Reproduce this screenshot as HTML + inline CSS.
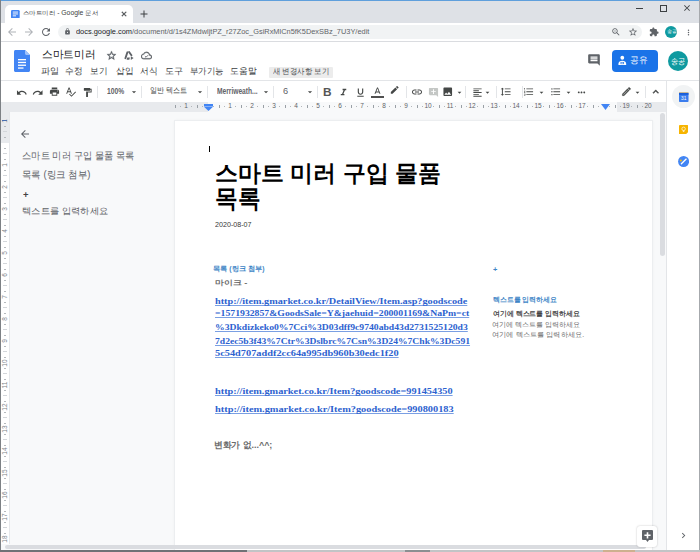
<!DOCTYPE html>
<html><head><meta charset="utf-8">
<style>
*{margin:0;padding:0;box-sizing:border-box}
html,body{width:700px;height:552px;overflow:hidden;background:#fff;font-family:"Liberation Sans",sans-serif;position:relative}
.a{position:absolute;white-space:nowrap}
</style></head><body>
<div class="a" style="left:0px;top:0px;width:700px;height:23px;background:#dee1e6;"></div>
<div class="a" style="left:0px;top:0px;width:700px;height:1.2px;background:#5f9fdc;"></div>
<div class="a" style="left:5px;top:4.6px;width:128px;height:18.4px;background:#fff;border-radius:5px 5px 0 0"></div>
<svg class="a" style="left:11px;top:9.5px" width="8.7" height="8.5" viewBox="0 0 8.7 8.5"><rect x="0" y="0" width="8.7" height="8.5" rx="1.2" fill="#4285f4"/><rect x="1.8" y="1.6" width="5.2" height="0.9" fill="#fff"/><rect x="1.8" y="3.5" width="5.2" height="0.9" fill="#fff"/><rect x="1.8" y="5.4" width="3.2" height="0.9" fill="#fff"/></svg>
<div class="a" id="tab" style="left:22.62px;top:9.99px;font-size:6.352px;color:#3c4043;line-height:1;transform:scaleX(1.0752);transform-origin:0 0;">스마트미러 - Google 문서</div>
<svg class="a" style="left:119.50px;top:9.50px;overflow:visible" width="8" height="8" viewBox="0 0 24 24"><path fill="#3c4043" stroke="#3c4043" stroke-width="1.2" d="M19 6.41L17.59 5 12 10.59 6.41 5 5 6.41 10.59 12 5 17.59 6.41 19 12 13.41 17.59 19 19 17.59 13.41 12z"/></svg>
<svg class="a" style="left:137.50px;top:8.00px;" width="12" height="12" viewBox="0 0 24 24"><path fill="#3c4043" d="M19 13h-6v6h-2v-6H5v-2h6V5h2v6h6v2z"/></svg>
<div class="a" style="left:635.5px;top:8px;width:7px;height:1px;background:#3c4043;"></div>
<div class="a" style="left:660px;top:5px;width:6.5px;height:6.5px;background:transparent;border:1px solid #3c4043"></div>
<svg class="a" style="left:681.80px;top:3.00px;" width="10" height="10" viewBox="0 0 24 24"><path fill="#3c4043" d="M19 6.41L17.59 5 12 10.59 6.41 5 5 6.41 10.59 12 5 17.59 6.41 19 12 13.41 17.59 19 19 17.59 13.41 12z"/></svg>
<div class="a" style="left:0px;top:23px;width:700px;height:19px;background:#fff;"></div>
<svg class="a" style="left:6.00px;top:26.00px;" width="12" height="12" viewBox="0 0 24 24"><path fill="#b0b3b8" d="M20 11H7.83l5.59-5.59L12 4l-8 8 8 8 1.41-1.41L7.83 13H20v-2z"/></svg>
<svg class="a" style="left:23.00px;top:26.00px;" width="12" height="12" viewBox="0 0 24 24"><path fill="#b0b3b8" d="M12 4l-1.41 1.41L16.17 11H4v2h12.17l-5.58 5.59L12 20l8-8z"/></svg>
<svg class="a" style="left:40.00px;top:26.00px;" width="12" height="12" viewBox="0 0 24 24"><path fill="#5f6368" d="M17.65 6.35C16.2 4.9 14.21 4 12 4c-4.42 0-7.99 3.58-7.99 8s3.570 8 7.99 8c3.73 0 6.84-2.55 7.73-6h-2.08c-.82 2.33-3.04 4-5.65 4-3.31 0-6-2.69-6-6s2.69-6 6-6c1.66 0 3.14.69 4.22 1.78L13 11h7V4l-2.35 2.35z"/></svg>
<div class="a" style="left:58px;top:25px;width:584px;height:14px;background:#f1f3f4;border-radius:7px"></div>
<svg class="a" style="left:63.80px;top:28.30px;" width="7" height="7" viewBox="0 0 24 24"><path fill="#5f6368" d="M18 8h-1V6c0-2.76-2.24-5-5-5S7 3.24 7 6v2H6c-1.1 0-2 .9-2 2v10c0 1.1.9 2 2 2h12c1.1 0 2-.9 2-2V10c0-1.1-.9-2-2-2zm-6 9c-1.1 0-2-.9-2-2s.9-2 2-2 2 .9 2 2-.9 2-2 2zm3.1-9H8.9V6c0-1.71 1.39-3.1 3.1-3.1 1.71 0 3.1 1.39 3.1 3.1v2z"/></svg>
<div class="a" id="url" style="left:75.80px;top:28.00px;font-size:7.389px;color:#202124;line-height:1;transform:scaleX(1.0051);transform-origin:0 0;">docs.google.com<span style="color:#5f6368">/document/d/1s4ZMdwljtPZ_r27Zoc_GsiRxMlCn5fK5DexSBz_7U3Y/edit</span></div>
<svg class="a" style="left:610.50px;top:27.00px;" width="10" height="10" viewBox="0 0 24 24"><path fill="#5f6368" d="M15.5 14h-.79l-.28-.27C15.41 12.59 16 11.11 16 9.5 16 5.91 13.09 3 9.5 3S3 5.91 3 9.5 5.91 16 9.5 16c1.61 0 3.09-.59 4.23-1.57l.27.28v.79l5 4.99L20.49 19l-4.99-5zm-6 0C7.01 14 5 11.99 5 9.5S7.01 5 9.5 5 14 7.01 14 9.5 11.99 14 9.5 14zM7 9h5v1H7z"/></svg>
<svg class="a" style="left:627.50px;top:27.00px;" width="10" height="10" viewBox="0 0 24 24"><path fill="#5f6368" d="M22 9.24l-7.19-.62L12 2 9.19 8.63 2 9.24l5.46 4.73L5.82 21 12 17.27 18.18 21l-1.63-7.03L22 9.24zM12 15.4l-3.76 2.27 1-4.28-3.32-2.88 4.38-.38L12 6.1l1.71 4.04 4.38.38-3.32 2.88 1 4.28L12 15.4z"/></svg>
<svg class="a" style="left:648.50px;top:27.00px;" width="10" height="10" viewBox="0 0 24 24"><path fill="#5f6368" d="M20.5 11H19V7c0-1.1-.9-2-2-2h-4V3.5C13 2.12 11.88 1 10.5 1S8 2.12 8 3.5V5H4c-1.1 0-1.99.9-1.99 2v3.8H3.5c1.49 0 2.7 1.21 2.7 2.7s-1.21 2.7-2.7 2.7H2V20c0 1.1.9 2 2 2h3.8v-1.5c0-1.49 1.21-2.7 2.7-2.7 1.49 0 2.7 1.21 2.7 2.7V22H17c1.1 0 2-.9 2-2v-4h1.5c1.38 0 2.5-1.12 2.5-2.5S21.88 11 20.5 11z"/></svg>
<div class="a" style="left:665px;top:26px;width:12px;height:12px;background:#0f9aa0;border-radius:50%"></div>
<div class="a" id="t3" style="left:666.50px;top:29.50px;font-size:4.500px;color:#fff;line-height:1;">송공</div>
<svg class="a" style="left:683.50px;top:27.50px;" width="9" height="9" viewBox="0 0 24 24"><path fill="#5f6368" d="M12 8c1.1 0 2-.9 2-2s-.9-2-2-2-2 .9-2 2 .9 2 2 2zm0 2c-1.1 0-2 .9-2 2s.9 2 2 2 2-.9 2-2-.9-2-2-2zm0 6c-1.1 0-2 .9-2 2s.9 2 2 2 2-.9 2-2-.9-2-2-2z"/></svg>
<div class="a" style="left:0px;top:41px;width:700px;height:1px;background:#dadce0;"></div>
<svg class="a" style="left:14px;top:50px" width="16" height="22" viewBox="0 0 16 22"><path d="M0 1.5C0 .7.7 0 1.5 0H11l5 5v15.5c0 .8-.7 1.5-1.5 1.5h-13C.7 22 0 21.3 0 20.5z" fill="#4285f4"/><path d="M11 0l5 5h-3.5C11.7 5 11 4.3 11 3.5z" fill="#a1c2fa"/><rect x="4" y="9" width="8" height="1.3" fill="#fff"/><rect x="4" y="11.8" width="8" height="1.3" fill="#fff"/><rect x="4" y="14.6" width="8" height="1.3" fill="#fff"/><rect x="4" y="17.4" width="5.5" height="1.3" fill="#fff"/></svg>
<div class="a" id="doctitle" style="left:42.32px;top:49.14px;font-size:11.109px;color:#202124;line-height:1;transform:scaleX(0.9742);transform-origin:0 0;">스마트미러</div>
<svg class="a" style="left:106px;top:49.5px" width="11" height="11" viewBox="0 0 24 24"><path fill="#5f6368" stroke="#5f6368" stroke-width="0.8" d="M22 9.24l-7.19-.62L12 2 9.19 8.63 2 9.24l5.46 4.73L5.82 21 12 17.27 18.18 21l-1.63-7.03L22 9.24zM12 15.4l-3.76 2.27 1-4.28-3.32-2.88 4.38-.38L12 6.1l1.71 4.04 4.38.38-3.32 2.88 1 4.28L12 15.4z"/></svg>
<svg class="a" style="left:123.5px;top:50.5px" width="10" height="10" viewBox="0 0 10 10"><g stroke="#5f6368" stroke-width="1.9" stroke-linecap="round" fill="none"><path d="M3.4 1.3L1.4 7.2"/><path d="M5.1 1.0L7.4 4.3"/></g><path d="M3.3 6.4h2.6l-0.6 2.4H2.6z" fill="#5f6368"/><path d="M6.8 5.2L9.6 7.1 6.8 9z" fill="#5f6368"/></svg>
<svg class="a" style="left:141px;top:50px" width="11" height="11" viewBox="0 0 24 24"><path fill="#5f6368" stroke="#5f6368" stroke-width="0.6" d="M19.35 10.04C18.67 6.59 15.64 4 12 4 9.11 4 6.6 5.64 5.35 8.04 2.34 8.36 0 10.91 0 14c0 3.31 2.69 6 6 6h13c2.76 0 5-2.24 5-5 0-2.64-2.05-4.78-4.65-4.96zM19 18H6c-2.21 0-4-1.790-4-4 0-2.05 1.53-3.76 3.56-3.97l1.07-.11.5-.95C8.08 7.14 9.94 6 12 6c2.62 0 4.88 1.86 5.39 4.43l.3 1.5 1.53.11c1.56.1 2.78 1.41 2.78 2.96 0 1.65-1.35 3-3 3z"/><path d="M8.5 13.5l2.5 2.3 4.5-4.5" stroke="#5f6368" stroke-width="2" fill="none"/></svg>
<div class="a" id="menu0" style="left:40.88px;top:66.75px;font-size:9.000px;color:#3c4043;line-height:1;transform:scaleX(1.0199);transform-origin:0 0;">파일</div>
<div class="a" id="menu1" style="left:64.90px;top:66.75px;font-size:9.000px;color:#3c4043;line-height:1;transform:scaleX(0.9627);transform-origin:0 0;">수정</div>
<div class="a" id="menu2" style="left:90.26px;top:66.75px;font-size:9.000px;color:#3c4043;line-height:1;transform:scaleX(0.9597);transform-origin:0 0;">보기</div>
<div class="a" id="menu3" style="left:115.67px;top:67.24px;font-size:9.018px;color:#3c4043;line-height:1;transform:scaleX(0.9695);transform-origin:0 0;">삽입</div>
<div class="a" id="menu4" style="left:139.91px;top:67.24px;font-size:9.018px;color:#3c4043;line-height:1;transform:scaleX(0.9678);transform-origin:0 0;">서식</div>
<div class="a" id="menu5" style="left:165.26px;top:66.71px;font-size:9.318px;color:#3c4043;line-height:1;transform:scaleX(1.0130);transform-origin:0 0;">도구</div>
<div class="a" id="menu6" style="left:189.80px;top:66.75px;font-size:9.000px;color:#3c4043;line-height:1;transform:scaleX(0.9353);transform-origin:0 0;">부가기능</div>
<div class="a" id="menu7" style="left:229.70px;top:67.24px;font-size:9.018px;color:#3c4043;line-height:1;transform:scaleX(0.9813);transform-origin:0 0;">도움말</div>
<div class="a" style="left:269px;top:66.9px;width:63.6px;height:10.8px;background:#ececec;border-radius:1px"></div>
<div class="a" id="newch" style="left:273.00px;top:67.73px;font-size:8.059px;color:#4a4d51;line-height:1;transform:scaleX(0.9257);transform-origin:0 0;">새 변경사항 보기</div>
<svg class="a" style="left:587.00px;top:53.20px;" width="14" height="14" viewBox="0 0 24 24"><path fill="#5f6368" d="M21.99 4c0-1.1-.89-2-1.99-2H4c-1.1 0-2 .9-2 2v12c0 1.1.9 2 2 2h14l4 4-.01-18zM18 14H6v-2h12v2zm0-3H6V9h12v2zm0-3H6V6h12v2z"/></svg>
<div class="a" style="left:612px;top:50px;width:46px;height:22px;background:#1a73e8;border-radius:4px"></div>
<svg class="a" style="left:618.3px;top:55.2px" width="8.6" height="10.5" viewBox="0 0 10 11"><circle cx="5" cy="2.6" r="2.2" fill="#fff"/><path d="M0.5 9.5c0-2.2 2-3.5 4.5-3.5s4.5 1.3 4.5 3.5V11H.5z" fill="#fff"/><rect x="3" y="7.5" width="4" height="2.5" fill="#1a73e8"/><rect x="3.7" y="8.2" width="2.6" height="1.2" fill="#fff"/></svg>
<div class="a" id="share" style="left:629.51px;top:56.48px;font-size:9.119px;color:#fff;line-height:1;transform:scaleX(0.9700);transform-origin:0 0;">공유</div>
<div class="a" style="left:668px;top:51px;width:20px;height:20px;background:#0f9aa0;border-radius:50%"></div>
<div class="a" id="avatar" style="left:670.65px;top:57.99px;font-size:7.738px;color:#fff;line-height:1;transform:scaleX(0.8929);transform-origin:0 0;">송공</div>
<div class="a" style="left:0px;top:79.5px;width:699px;height:1px;background:#e3e5e8;"></div>
<div class="a" style="left:0px;top:101.5px;width:667px;height:0.5px;background:#e3e5e8;"></div>
<svg class="a" style="left:15.75px;top:86.75px;" width="11.5" height="11.5" viewBox="0 0 24 24"><path fill="#444746" d="M12.5 8c-2.65 0-5.05.99-6.9 2.6L2 7v9h9l-3.62-3.62c1.39-1.16 3.160-1.88 5.12-1.88 3.54 0 6.55 2.31 7.6 5.5l2.37-.78C21.08 11.03 17.15 8 12.5 8z"/></svg>
<svg class="a" style="left:31.75px;top:86.75px;" width="11.5" height="11.5" viewBox="0 0 24 24"><path fill="#444746" d="M18.4 10.6C16.55 8.99 14.15 8 11.5 8c-4.65 0-8.58 3.03-9.96 7.220L3.9 16c1.05-3.19 4.05-5.5 7.6-5.5 1.95 0 3.73.72 5.12 1.88L13 16h9V7l-3.6 3.6z"/></svg>
<svg class="a" style="left:49.00px;top:86.30px;" width="11" height="11" viewBox="0 0 24 24"><path fill="#444746" d="M19 8H5c-1.66 0-3 1.34-3 3v6h4v4h12v-4h4v-6c0-1.66-1.34-3-3-3zm-3 11H8v-5h8v5zm3-7c-.55 0-1-.45-1-1s.45-1 1-1 1 .45 1 1-.45 1-1 1zm-1-9H6v4h12V3z"/></svg>
<svg class="a" style="left:64.75px;top:86.05px;" width="11.5" height="11.5" viewBox="0 0 24 24"><path fill="#444746" d="M12.45 16h2.09L9.43 3H7.570L2.46 16h2.09l1.12-3h5.64l1.14 3zm-6.02-5L8.5 5.48 10.57 11H6.43zm15.16.59l-8.09 8.09L9.83 16l-1.41 1.41 5.09 5.09L23 13l-1.41-1.41z"/></svg>
<svg class="a" style="left:82.00px;top:86.50px;" width="11" height="11" viewBox="0 0 24 24"><path fill="#444746" d="M18 4V3c0-.55-.45-1-1-1H5c-.55 0-1 .45-1 1v4c0 .55.45 1 1 1h12c.55 0 1-.45 1-1V6h1v4H9v11c0 .55.45 1 1 1h2c.55 0 1-.45 1-1v-9h8V4h-3z"/></svg>
<div class="a" style="left:97px;top:85.5px;width:1px;height:12px;background:#e3e5e8;"></div>
<div class="a" style="left:141px;top:85.5px;width:1px;height:12px;background:#e3e5e8;"></div>
<div class="a" style="left:207px;top:85.5px;width:1px;height:12px;background:#e3e5e8;"></div>
<div class="a" style="left:273px;top:85.5px;width:1px;height:12px;background:#e3e5e8;"></div>
<div class="a" style="left:317px;top:85.5px;width:1px;height:12px;background:#e3e5e8;"></div>
<div class="a" style="left:406px;top:85.5px;width:1px;height:12px;background:#e3e5e8;"></div>
<div class="a" style="left:465px;top:85.5px;width:1px;height:12px;background:#e3e5e8;"></div>
<div class="a" style="left:496px;top:85.5px;width:1px;height:12px;background:#e3e5e8;"></div>
<div class="a" style="left:522px;top:85.5px;width:1px;height:12px;background:#e3e5e8;"></div>
<div class="a" style="left:645px;top:85.5px;width:1px;height:12px;background:#e3e5e8;"></div>
<div class="a" id="zoom" style="left:106.69px;top:87.12px;font-size:8.297px;color:#5f6368;line-height:1;transform:scaleX(0.8105);transform-origin:0 0;font-weight:bold">100%</div>
<svg class="a" style="left:128.50px;top:86.50px;" width="10" height="10" viewBox="0 0 24 24"><path fill="#444746" d="M7 10l5 5 5-5z"/></svg>
<div class="a" id="style" style="left:149.85px;top:86.52px;font-size:7.724px;color:#444746;line-height:1;transform:scaleX(0.8826);transform-origin:0 0;">일반 텍스트</div>
<svg class="a" style="left:194.50px;top:86.50px;" width="10" height="10" viewBox="0 0 24 24"><path fill="#444746" d="M7 10l5 5 5-5z"/></svg>
<div class="a" id="font" style="left:216.67px;top:87.22px;font-size:8.348px;color:#5f6368;line-height:1;transform:scaleX(0.7978);transform-origin:0 0;font-weight:bold">Merriweath...</div>
<svg class="a" style="left:260.50px;top:86.50px;" width="10" height="10" viewBox="0 0 24 24"><path fill="#444746" d="M7 10l5 5 5-5z"/></svg>
<div class="a" id="fsize" style="left:283.09px;top:86.91px;font-size:8.727px;color:#5f6368;line-height:1;transform:scaleX(1.0596);transform-origin:0 0;">6</div>
<svg class="a" style="left:304.50px;top:86.50px;" width="10" height="10" viewBox="0 0 24 24"><path fill="#444746" d="M7 10l5 5 5-5z"/></svg>
<div class="a" id="bold" style="left:322.50px;top:87.10px;font-size:10.500px;color:#555;line-height:1;transform:scaleX(1.1278);transform-origin:0 0;font-weight:bold">B</div>
<svg class="a" style="left:337.50px;top:86.50px;" width="11" height="11" viewBox="0 0 24 24"><path fill="#444746" d="M10 4v3h2.21l-3.42 8H6v3h8v-3h-2.21l3.42-8H18V4z"/></svg>
<svg class="a" style="left:354.50px;top:87.00px;" width="11" height="11" viewBox="0 0 24 24"><path fill="#444746" d="M12 17c3.31 0 6-2.69 6-6V3h-2.5v8c0 1.93-1.57 3.5-3.5 3.5S8.5 12.93 8.5 11V3H6v8c0 3.31 2.690 6 6 6zm-7 2v2h14v-2H5z"/></svg>
<svg class="a" style="left:371.50px;top:85.50px;" width="11" height="11" viewBox="0 0 24 24"><path fill="#444746" d="M11 3L5.5 17h2.25l1.12-3h6.25l1.12 3h2.25L13 3h-2zm-1.38 9L12 5.67 14.38 12H9.62z"/></svg>
<div class="a" style="left:371px;top:96.3px;width:12.5px;height:1.5px;background:#505050;"></div>
<svg class="a" style="left:388.50px;top:86.00px;" width="11" height="11" viewBox="0 0 24 24"><path fill="#444746" d="M17.75 7L14 3.25l-10 10V17h3.75l10-10zm2.96-2.96c.39-.39.39-1.02 0-1.41L18.37.29c-.39-.39-1.02-.39-1.41 0L15 2.25 18.75 6l1.96-1.96z"/></svg>
<svg class="a" style="left:411.00px;top:86.00px;" width="12" height="12" viewBox="0 0 24 24"><path fill="#444746" d="M3.9 12c0-1.71 1.39-3.1 3.1-3.1h4V7H7c-2.76 0-5 2.24-5 5s2.24 5 5 5h4v-1.9H7c-1.71 0-3.1-1.39-3.1-3.1zM8 13h8v-2H8v2zm9-6h-4v1.9h4c1.71 0 3.1 1.39 3.1 3.1s-1.39 3.1-3.1 3.1h-4V17h4c2.76 0 5-2.24 5-5s-2.24-5-5-5z"/></svg>
<svg class="a" style="left:427.50px;top:86.50px;" width="11" height="11" viewBox="0 0 24 24"><path fill="#c4c7c5" d="M22 4c0-1.1-.9-2-2-2H4c-1.1 0-1.99.9-1.99 2L2 16c0 1.1.9 2 2 2h14l4 4V4zm-5 7h-4v4h-2v-4H7V9h4V5h2v4h4v2z"/></svg>
<svg class="a" style="left:442.25px;top:86.25px;" width="11.5" height="11.5" viewBox="0 0 24 24"><path fill="#444746" d="M21 19V5c0-1.1-.9-2-2-2H5c-1.1 0-2 .9-2 2v14c0 1.1.9 2 2 2h14c1.1 0 2-.9 2-2zM8.5 13.5l2.5 3.01L14.5 12l4.5 6H5l3.5-4.5z"/></svg>
<svg class="a" style="left:454.50px;top:87.50px;" width="9" height="9" viewBox="0 0 24 24"><path fill="#444746" d="M7 10l5 5 5-5z"/></svg>
<svg class="a" style="left:471.50px;top:86.50px;" width="11" height="11" viewBox="0 0 24 24"><path fill="#444746" d="M15 15H3v2h12v-2zm0-8H3v2h12V7zM3 13h18v-2H3v2zm0 8h18v-2H3v2zM3 3v2h18V3H3z"/></svg>
<svg class="a" style="left:482.50px;top:87.50px;" width="9" height="9" viewBox="0 0 24 24"><path fill="#444746" d="M7 10l5 5 5-5z"/></svg>
<svg class="a" style="left:500.25px;top:86.25px;" width="11.5" height="11.5" viewBox="0 0 24 24"><path fill="#444746" d="M6 7h2.5L5 3.5 1.5 7H4v10H1.5L5 20.5 8.5 17H6V7zm4-2v2h12V5H10zm0 14h12v-2H10v2zm0-6h12v-2H10v2z"/></svg>
<svg class="a" style="left:523.25px;top:86.25px;" width="11.5" height="11.5" viewBox="0 0 24 24"><path fill="#444746" d="M2 17h2v.5H3v1h1v.5H2v1h3v-4H2v1zm1-9h1V4H2v1h1v3zm-1 3h1.8L2 13.1v.9h3v-1H3.2L5 10.9V10H2v1zm5-6v2h14V5H7zm0 14h14v-2H7v2zm0-6h14v-2H7v2z"/></svg>
<svg class="a" style="left:536.50px;top:87.50px;" width="9" height="9" viewBox="0 0 24 24"><path fill="#444746" d="M7 10l5 5 5-5z"/></svg>
<svg class="a" style="left:550.25px;top:86.25px;" width="11.5" height="11.5" viewBox="0 0 24 24"><path fill="#444746" d="M4 10.5c-.83 0-1.5.67-1.5 1.5s.67 1.5 1.5 1.5 1.5-.67 1.5-1.5-.67-1.5-1.5-1.5zm0-6c-.83 0-1.5.67-1.5 1.5S3.17 7.5 4 7.5 5.5 6.83 5.5 6 4.83 4.5 4 4.5zm0 12c-.83 0-1.5.68-1.5 1.5s.68 1.5 1.5 1.5 1.5-.68 1.5-1.5-.67-1.5-1.5-1.5zM7 19h14v-2H7v2zm0-6h14v-2H7v2zm0-8v2h14V5H7z"/></svg>
<svg class="a" style="left:563.50px;top:87.50px;" width="9" height="9" viewBox="0 0 24 24"><path fill="#444746" d="M7 10l5 5 5-5z"/></svg>
<svg class="a" style="left:575.50px;top:86.50px;" width="11" height="11" viewBox="0 0 24 24"><path fill="#444746" d="M6 10c-1.1 0-2 .9-2 2s.9 2 2 2 2-.9 2-2-.9-2-2-2zm12 0c-1.1 0-2 .9-2 2s.9 2 2 2 2-.9 2-2-.9-2-2-2zm-6 0c-1.1 0-2 .9-2 2s.9 2 2 2 2-.9 2-2-.9-2-2-2z"/></svg>
<svg class="a" style="left:620.80px;top:86.00px;" width="11" height="11" viewBox="0 0 24 24"><path fill="#444746" stroke="#444746" stroke-width="0.8" d="M3 17.25V21h3.75L17.81 9.94l-3.75-3.75L3 17.25zM5.92 19H5v-.92l9.06-9.06.92.92L5.92 19zM20.71 5.63l-2.34-2.34c-.2-.2-.45-.29-.71-.29s-.51.1-.7.29l-1.83 1.83 3.75 3.75 1.83-1.83c.39-.39.39-1.02 0-1.41z"/></svg>
<svg class="a" style="left:632.50px;top:87.50px;" width="9" height="9" viewBox="0 0 24 24"><path fill="#444746" d="M7 10l5 5 5-5z"/></svg>
<svg class="a" style="left:650.05px;top:85.75px;" width="11.5" height="11.5" viewBox="0 0 24 24"><path fill="#444746" stroke="#444746" stroke-width="0.9" d="M12 8l-6 6 1.41 1.41L12 10.83l4.59 4.58L18 14z"/></svg>
<div class="a" style="left:0px;top:102px;width:667px;height:9.5px;background:#e8eaed;"></div>
<div class="a" style="left:208px;top:102px;width:409px;height:9.5px;background:#f8f9fa;"></div>
<div class="a" style="left:174.5px;top:104.8px;width:1px;height:3.5px;background:#9aa0a6"></div>
<div class="a" style="left:180.0px;top:105.9px;width:1px;height:1.2px;background:#b3b7bb"></div>
<div class="a" style="left:176px;top:103.2px;width:20px;text-align:center;font-size:6.5px;line-height:1;color:#5f6368">1</div>
<div class="a" style="left:191.0px;top:105.9px;width:1px;height:1.2px;background:#b3b7bb"></div>
<div class="a" style="left:196.5px;top:104.8px;width:1px;height:3.5px;background:#9aa0a6"></div>
<div class="a" style="left:202.0px;top:105.9px;width:1px;height:1.2px;background:#b3b7bb"></div>
<div class="a" style="left:213.0px;top:105.9px;width:1px;height:1.2px;background:#b3b7bb"></div>
<div class="a" style="left:218.5px;top:104.8px;width:1px;height:3.5px;background:#9aa0a6"></div>
<div class="a" style="left:224.0px;top:105.9px;width:1px;height:1.2px;background:#b3b7bb"></div>
<div class="a" style="left:220px;top:103.2px;width:20px;text-align:center;font-size:6.5px;line-height:1;color:#5f6368">1</div>
<div class="a" style="left:235.0px;top:105.9px;width:1px;height:1.2px;background:#b3b7bb"></div>
<div class="a" style="left:240.5px;top:104.8px;width:1px;height:3.5px;background:#9aa0a6"></div>
<div class="a" style="left:246.0px;top:105.9px;width:1px;height:1.2px;background:#b3b7bb"></div>
<div class="a" style="left:242px;top:103.2px;width:20px;text-align:center;font-size:6.5px;line-height:1;color:#5f6368">2</div>
<div class="a" style="left:257.0px;top:105.9px;width:1px;height:1.2px;background:#b3b7bb"></div>
<div class="a" style="left:262.5px;top:104.8px;width:1px;height:3.5px;background:#9aa0a6"></div>
<div class="a" style="left:268.0px;top:105.9px;width:1px;height:1.2px;background:#b3b7bb"></div>
<div class="a" style="left:264px;top:103.2px;width:20px;text-align:center;font-size:6.5px;line-height:1;color:#5f6368">3</div>
<div class="a" style="left:279.0px;top:105.9px;width:1px;height:1.2px;background:#b3b7bb"></div>
<div class="a" style="left:284.5px;top:104.8px;width:1px;height:3.5px;background:#9aa0a6"></div>
<div class="a" style="left:290.0px;top:105.9px;width:1px;height:1.2px;background:#b3b7bb"></div>
<div class="a" style="left:286px;top:103.2px;width:20px;text-align:center;font-size:6.5px;line-height:1;color:#5f6368">4</div>
<div class="a" style="left:301.0px;top:105.9px;width:1px;height:1.2px;background:#b3b7bb"></div>
<div class="a" style="left:306.5px;top:104.8px;width:1px;height:3.5px;background:#9aa0a6"></div>
<div class="a" style="left:312.0px;top:105.9px;width:1px;height:1.2px;background:#b3b7bb"></div>
<div class="a" style="left:308px;top:103.2px;width:20px;text-align:center;font-size:6.5px;line-height:1;color:#5f6368">5</div>
<div class="a" style="left:323.0px;top:105.9px;width:1px;height:1.2px;background:#b3b7bb"></div>
<div class="a" style="left:328.5px;top:104.8px;width:1px;height:3.5px;background:#9aa0a6"></div>
<div class="a" style="left:334.0px;top:105.9px;width:1px;height:1.2px;background:#b3b7bb"></div>
<div class="a" style="left:330px;top:103.2px;width:20px;text-align:center;font-size:6.5px;line-height:1;color:#5f6368">6</div>
<div class="a" style="left:345.0px;top:105.9px;width:1px;height:1.2px;background:#b3b7bb"></div>
<div class="a" style="left:350.5px;top:104.8px;width:1px;height:3.5px;background:#9aa0a6"></div>
<div class="a" style="left:356.0px;top:105.9px;width:1px;height:1.2px;background:#b3b7bb"></div>
<div class="a" style="left:352px;top:103.2px;width:20px;text-align:center;font-size:6.5px;line-height:1;color:#5f6368">7</div>
<div class="a" style="left:367.0px;top:105.9px;width:1px;height:1.2px;background:#b3b7bb"></div>
<div class="a" style="left:372.5px;top:104.8px;width:1px;height:3.5px;background:#9aa0a6"></div>
<div class="a" style="left:378.0px;top:105.9px;width:1px;height:1.2px;background:#b3b7bb"></div>
<div class="a" style="left:374px;top:103.2px;width:20px;text-align:center;font-size:6.5px;line-height:1;color:#5f6368">8</div>
<div class="a" style="left:389.0px;top:105.9px;width:1px;height:1.2px;background:#b3b7bb"></div>
<div class="a" style="left:394.5px;top:104.8px;width:1px;height:3.5px;background:#9aa0a6"></div>
<div class="a" style="left:400.0px;top:105.9px;width:1px;height:1.2px;background:#b3b7bb"></div>
<div class="a" style="left:396px;top:103.2px;width:20px;text-align:center;font-size:6.5px;line-height:1;color:#5f6368">9</div>
<div class="a" style="left:411.0px;top:105.9px;width:1px;height:1.2px;background:#b3b7bb"></div>
<div class="a" style="left:416.5px;top:104.8px;width:1px;height:3.5px;background:#9aa0a6"></div>
<div class="a" style="left:422.0px;top:105.9px;width:1px;height:1.2px;background:#b3b7bb"></div>
<div class="a" style="left:418px;top:103.2px;width:20px;text-align:center;font-size:6.5px;line-height:1;color:#5f6368">10</div>
<div class="a" style="left:433.0px;top:105.9px;width:1px;height:1.2px;background:#b3b7bb"></div>
<div class="a" style="left:438.5px;top:104.8px;width:1px;height:3.5px;background:#9aa0a6"></div>
<div class="a" style="left:444.0px;top:105.9px;width:1px;height:1.2px;background:#b3b7bb"></div>
<div class="a" style="left:440px;top:103.2px;width:20px;text-align:center;font-size:6.5px;line-height:1;color:#5f6368">11</div>
<div class="a" style="left:455.0px;top:105.9px;width:1px;height:1.2px;background:#b3b7bb"></div>
<div class="a" style="left:460.5px;top:104.8px;width:1px;height:3.5px;background:#9aa0a6"></div>
<div class="a" style="left:466.0px;top:105.9px;width:1px;height:1.2px;background:#b3b7bb"></div>
<div class="a" style="left:462px;top:103.2px;width:20px;text-align:center;font-size:6.5px;line-height:1;color:#5f6368">12</div>
<div class="a" style="left:477.0px;top:105.9px;width:1px;height:1.2px;background:#b3b7bb"></div>
<div class="a" style="left:482.5px;top:104.8px;width:1px;height:3.5px;background:#9aa0a6"></div>
<div class="a" style="left:488.0px;top:105.9px;width:1px;height:1.2px;background:#b3b7bb"></div>
<div class="a" style="left:484px;top:103.2px;width:20px;text-align:center;font-size:6.5px;line-height:1;color:#5f6368">13</div>
<div class="a" style="left:499.0px;top:105.9px;width:1px;height:1.2px;background:#b3b7bb"></div>
<div class="a" style="left:504.5px;top:104.8px;width:1px;height:3.5px;background:#9aa0a6"></div>
<div class="a" style="left:510.0px;top:105.9px;width:1px;height:1.2px;background:#b3b7bb"></div>
<div class="a" style="left:506px;top:103.2px;width:20px;text-align:center;font-size:6.5px;line-height:1;color:#5f6368">14</div>
<div class="a" style="left:521.0px;top:105.9px;width:1px;height:1.2px;background:#b3b7bb"></div>
<div class="a" style="left:526.5px;top:104.8px;width:1px;height:3.5px;background:#9aa0a6"></div>
<div class="a" style="left:532.0px;top:105.9px;width:1px;height:1.2px;background:#b3b7bb"></div>
<div class="a" style="left:528px;top:103.2px;width:20px;text-align:center;font-size:6.5px;line-height:1;color:#5f6368">15</div>
<div class="a" style="left:543.0px;top:105.9px;width:1px;height:1.2px;background:#b3b7bb"></div>
<div class="a" style="left:548.5px;top:104.8px;width:1px;height:3.5px;background:#9aa0a6"></div>
<div class="a" style="left:554.0px;top:105.9px;width:1px;height:1.2px;background:#b3b7bb"></div>
<div class="a" style="left:550px;top:103.2px;width:20px;text-align:center;font-size:6.5px;line-height:1;color:#5f6368">16</div>
<div class="a" style="left:565.0px;top:105.9px;width:1px;height:1.2px;background:#b3b7bb"></div>
<div class="a" style="left:570.5px;top:104.8px;width:1px;height:3.5px;background:#9aa0a6"></div>
<div class="a" style="left:576.0px;top:105.9px;width:1px;height:1.2px;background:#b3b7bb"></div>
<div class="a" style="left:572px;top:103.2px;width:20px;text-align:center;font-size:6.5px;line-height:1;color:#5f6368">17</div>
<div class="a" style="left:587.0px;top:105.9px;width:1px;height:1.2px;background:#b3b7bb"></div>
<div class="a" style="left:592.5px;top:104.8px;width:1px;height:3.5px;background:#9aa0a6"></div>
<div class="a" style="left:598.0px;top:105.9px;width:1px;height:1.2px;background:#b3b7bb"></div>
<div class="a" style="left:609.0px;top:105.9px;width:1px;height:1.2px;background:#b3b7bb"></div>
<div class="a" style="left:614.5px;top:104.8px;width:1px;height:3.5px;background:#9aa0a6"></div>
<div class="a" style="left:620.0px;top:105.9px;width:1px;height:1.2px;background:#b3b7bb"></div>
<div class="a" style="left:616px;top:103.2px;width:20px;text-align:center;font-size:6.5px;line-height:1;color:#5f6368">19</div>
<div class="a" style="left:631.0px;top:105.9px;width:1px;height:1.2px;background:#b3b7bb"></div>
<div class="a" style="left:636.5px;top:104.8px;width:1px;height:3.5px;background:#9aa0a6"></div>
<div class="a" style="left:642.0px;top:105.9px;width:1px;height:1.2px;background:#b3b7bb"></div>
<div class="a" style="left:638px;top:103.2px;width:20px;text-align:center;font-size:6.5px;line-height:1;color:#5f6368">20</div>
<svg class="a" style="left:203.5px;top:103.5px" width="9" height="7" viewBox="0 0 9 7"><path d="M0 0h9v2.8L4.5 7 0 2.8z" fill="#4285f4"/><rect x="0" y="2.2" width="9" height="0.6" fill="#fff" opacity=".6"/></svg>
<svg class="a" style="left:601px;top:104px" width="9" height="6" viewBox="0 0 9 6"><path d="M0 0h9L4.5 6z" fill="#4285f4"/></svg>
<div class="a" style="left:0px;top:112px;width:667px;height:440px;background:#f8f9fa;"></div>
<div class="a" style="left:175px;top:121px;width:477px;height:431px;background:#fff;box-shadow:0 0 0 1px #eceef0,0 0 3px rgba(60,64,67,.10)"></div>
<div class="a" style="left:1px;top:111.5px;width:8px;height:432px;background:#fff;"></div>
<div class="a" style="left:1px;top:111.5px;width:8px;height:31.5px;background:#e8eaed;"></div>
<div class="a" style="left:9px;top:111.5px;width:1px;height:432px;background:#e5e7ea;"></div>
<div class="a" style="left:0px;top:115.5px;width:10px;height:10px;font-size:6.5px;line-height:10px;text-align:center;color:#80868b;transform:rotate(-90deg)">1</div>
<div class="a" style="left:4.4px;top:125.5px;width:1.2px;height:1px;background:#b5b9bd"></div>
<div class="a" style="left:3.2px;top:131.0px;width:3.5px;height:1px;background:#d3d6da"></div>
<div class="a" style="left:4.4px;top:136.5px;width:1.2px;height:1px;background:#b5b9bd"></div>
<div class="a" style="left:4.4px;top:147.5px;width:1.2px;height:1px;background:#b5b9bd"></div>
<div class="a" style="left:3.2px;top:153.0px;width:3.5px;height:1px;background:#d3d6da"></div>
<div class="a" style="left:4.4px;top:158.5px;width:1.2px;height:1px;background:#b5b9bd"></div>
<div class="a" style="left:0px;top:159.5px;width:10px;height:10px;font-size:6.5px;line-height:10px;text-align:center;color:#80868b;transform:rotate(-90deg)">1</div>
<div class="a" style="left:4.4px;top:169.5px;width:1.2px;height:1px;background:#b5b9bd"></div>
<div class="a" style="left:3.2px;top:175.0px;width:3.5px;height:1px;background:#d3d6da"></div>
<div class="a" style="left:4.4px;top:180.5px;width:1.2px;height:1px;background:#b5b9bd"></div>
<div class="a" style="left:0px;top:181.5px;width:10px;height:10px;font-size:6.5px;line-height:10px;text-align:center;color:#80868b;transform:rotate(-90deg)">2</div>
<div class="a" style="left:4.4px;top:191.5px;width:1.2px;height:1px;background:#b5b9bd"></div>
<div class="a" style="left:3.2px;top:197.0px;width:3.5px;height:1px;background:#d3d6da"></div>
<div class="a" style="left:4.4px;top:202.5px;width:1.2px;height:1px;background:#b5b9bd"></div>
<div class="a" style="left:0px;top:203.5px;width:10px;height:10px;font-size:6.5px;line-height:10px;text-align:center;color:#80868b;transform:rotate(-90deg)">3</div>
<div class="a" style="left:4.4px;top:213.5px;width:1.2px;height:1px;background:#b5b9bd"></div>
<div class="a" style="left:3.2px;top:219.0px;width:3.5px;height:1px;background:#d3d6da"></div>
<div class="a" style="left:4.4px;top:224.5px;width:1.2px;height:1px;background:#b5b9bd"></div>
<div class="a" style="left:0px;top:225.5px;width:10px;height:10px;font-size:6.5px;line-height:10px;text-align:center;color:#80868b;transform:rotate(-90deg)">4</div>
<div class="a" style="left:4.4px;top:235.5px;width:1.2px;height:1px;background:#b5b9bd"></div>
<div class="a" style="left:3.2px;top:241.0px;width:3.5px;height:1px;background:#d3d6da"></div>
<div class="a" style="left:4.4px;top:246.5px;width:1.2px;height:1px;background:#b5b9bd"></div>
<div class="a" style="left:0px;top:247.5px;width:10px;height:10px;font-size:6.5px;line-height:10px;text-align:center;color:#80868b;transform:rotate(-90deg)">5</div>
<div class="a" style="left:4.4px;top:257.5px;width:1.2px;height:1px;background:#b5b9bd"></div>
<div class="a" style="left:3.2px;top:263.0px;width:3.5px;height:1px;background:#d3d6da"></div>
<div class="a" style="left:4.4px;top:268.5px;width:1.2px;height:1px;background:#b5b9bd"></div>
<div class="a" style="left:0px;top:269.5px;width:10px;height:10px;font-size:6.5px;line-height:10px;text-align:center;color:#80868b;transform:rotate(-90deg)">6</div>
<div class="a" style="left:4.4px;top:279.5px;width:1.2px;height:1px;background:#b5b9bd"></div>
<div class="a" style="left:3.2px;top:285.0px;width:3.5px;height:1px;background:#d3d6da"></div>
<div class="a" style="left:4.4px;top:290.5px;width:1.2px;height:1px;background:#b5b9bd"></div>
<div class="a" style="left:0px;top:291.5px;width:10px;height:10px;font-size:6.5px;line-height:10px;text-align:center;color:#80868b;transform:rotate(-90deg)">7</div>
<div class="a" style="left:4.4px;top:301.5px;width:1.2px;height:1px;background:#b5b9bd"></div>
<div class="a" style="left:3.2px;top:307.0px;width:3.5px;height:1px;background:#d3d6da"></div>
<div class="a" style="left:4.4px;top:312.5px;width:1.2px;height:1px;background:#b5b9bd"></div>
<div class="a" style="left:0px;top:313.5px;width:10px;height:10px;font-size:6.5px;line-height:10px;text-align:center;color:#80868b;transform:rotate(-90deg)">8</div>
<div class="a" style="left:4.4px;top:323.5px;width:1.2px;height:1px;background:#b5b9bd"></div>
<div class="a" style="left:3.2px;top:329.0px;width:3.5px;height:1px;background:#d3d6da"></div>
<div class="a" style="left:4.4px;top:334.5px;width:1.2px;height:1px;background:#b5b9bd"></div>
<div class="a" style="left:0px;top:335.5px;width:10px;height:10px;font-size:6.5px;line-height:10px;text-align:center;color:#80868b;transform:rotate(-90deg)">9</div>
<div class="a" style="left:4.4px;top:345.5px;width:1.2px;height:1px;background:#b5b9bd"></div>
<div class="a" style="left:3.2px;top:351.0px;width:3.5px;height:1px;background:#d3d6da"></div>
<div class="a" style="left:4.4px;top:356.5px;width:1.2px;height:1px;background:#b5b9bd"></div>
<div class="a" style="left:0px;top:357.5px;width:10px;height:10px;font-size:6.5px;line-height:10px;text-align:center;color:#80868b;transform:rotate(-90deg)">10</div>
<div class="a" style="left:4.4px;top:367.5px;width:1.2px;height:1px;background:#b5b9bd"></div>
<div class="a" style="left:3.2px;top:373.0px;width:3.5px;height:1px;background:#d3d6da"></div>
<div class="a" style="left:4.4px;top:378.5px;width:1.2px;height:1px;background:#b5b9bd"></div>
<div class="a" style="left:0px;top:379.5px;width:10px;height:10px;font-size:6.5px;line-height:10px;text-align:center;color:#80868b;transform:rotate(-90deg)">11</div>
<div class="a" style="left:4.4px;top:389.5px;width:1.2px;height:1px;background:#b5b9bd"></div>
<div class="a" style="left:3.2px;top:395.0px;width:3.5px;height:1px;background:#d3d6da"></div>
<div class="a" style="left:4.4px;top:400.5px;width:1.2px;height:1px;background:#b5b9bd"></div>
<div class="a" style="left:0px;top:401.5px;width:10px;height:10px;font-size:6.5px;line-height:10px;text-align:center;color:#80868b;transform:rotate(-90deg)">12</div>
<div class="a" style="left:4.4px;top:411.5px;width:1.2px;height:1px;background:#b5b9bd"></div>
<div class="a" style="left:3.2px;top:417.0px;width:3.5px;height:1px;background:#d3d6da"></div>
<div class="a" style="left:4.4px;top:422.5px;width:1.2px;height:1px;background:#b5b9bd"></div>
<div class="a" style="left:0px;top:423.5px;width:10px;height:10px;font-size:6.5px;line-height:10px;text-align:center;color:#80868b;transform:rotate(-90deg)">13</div>
<div class="a" style="left:4.4px;top:433.5px;width:1.2px;height:1px;background:#b5b9bd"></div>
<div class="a" style="left:3.2px;top:439.0px;width:3.5px;height:1px;background:#d3d6da"></div>
<div class="a" style="left:4.4px;top:444.5px;width:1.2px;height:1px;background:#b5b9bd"></div>
<div class="a" style="left:0px;top:445.5px;width:10px;height:10px;font-size:6.5px;line-height:10px;text-align:center;color:#80868b;transform:rotate(-90deg)">14</div>
<div class="a" style="left:4.4px;top:455.5px;width:1.2px;height:1px;background:#b5b9bd"></div>
<div class="a" style="left:3.2px;top:461.0px;width:3.5px;height:1px;background:#d3d6da"></div>
<div class="a" style="left:4.4px;top:466.5px;width:1.2px;height:1px;background:#b5b9bd"></div>
<div class="a" style="left:0px;top:467.5px;width:10px;height:10px;font-size:6.5px;line-height:10px;text-align:center;color:#80868b;transform:rotate(-90deg)">15</div>
<div class="a" style="left:4.4px;top:477.5px;width:1.2px;height:1px;background:#b5b9bd"></div>
<div class="a" style="left:3.2px;top:483.0px;width:3.5px;height:1px;background:#d3d6da"></div>
<div class="a" style="left:4.4px;top:488.5px;width:1.2px;height:1px;background:#b5b9bd"></div>
<div class="a" style="left:0px;top:489.5px;width:10px;height:10px;font-size:6.5px;line-height:10px;text-align:center;color:#80868b;transform:rotate(-90deg)">16</div>
<div class="a" style="left:4.4px;top:499.5px;width:1.2px;height:1px;background:#b5b9bd"></div>
<div class="a" style="left:3.2px;top:505.0px;width:3.5px;height:1px;background:#d3d6da"></div>
<div class="a" style="left:4.4px;top:510.5px;width:1.2px;height:1px;background:#b5b9bd"></div>
<div class="a" style="left:0px;top:511.5px;width:10px;height:10px;font-size:6.5px;line-height:10px;text-align:center;color:#80868b;transform:rotate(-90deg)">17</div>
<div class="a" style="left:4.4px;top:521.5px;width:1.2px;height:1px;background:#b5b9bd"></div>
<div class="a" style="left:3.2px;top:527.0px;width:3.5px;height:1px;background:#d3d6da"></div>
<div class="a" style="left:4.4px;top:532.5px;width:1.2px;height:1px;background:#b5b9bd"></div>
<div class="a" style="left:0px;top:533.5px;width:10px;height:10px;font-size:6.5px;line-height:10px;text-align:center;color:#80868b;transform:rotate(-90deg)">18</div>
<div class="a" style="left:2px;top:119.5px;width:5px;height:1.6px;background:#4a6fb0;border-radius:0 1px 1px 0"></div>
<div class="a" style="left:659.5px;top:113px;width:5px;height:143px;background:#dadce0;border-radius:3px"></div>
<div class="a" style="left:5px;top:544.5px;width:641px;height:4.5px;background:#dadce0;border-radius:3px"></div>
<div class="a" style="left:667px;top:81px;width:32px;height:471px;background:#fff;"></div>
<div class="a" style="left:666px;top:80px;width:1px;height:472px;background:#e3e5e8;"></div>
<div class="a" style="left:672px;top:85px;width:23px;height:23px;background:#f1f3f4;border-radius:50%"></div>
<svg class="a" style="left:679px;top:91.5px" width="9.5" height="10" viewBox="0 0 9.5 10"><rect x="0" y="0" width="9.5" height="1.5" fill="#c9b99a"/><rect x="0" y="1" width="9.5" height="9" rx="0.8" fill="#3b7ded"/><rect x="0" y="1" width="9.5" height="1.8" fill="#1a5ed8"/><text x="4.75" y="8.3" font-size="4.8" fill="#fff" text-anchor="middle" font-family="Liberation Sans">31</text></svg>
<svg class="a" style="left:679px;top:124.5px" width="9.2" height="9.5" viewBox="0 0 11 11.4"><path d="M0 1a1 1 0 0 1 1-1h9a1 1 0 0 1 1 1v7.4l-3 3H1a1 1 0 0 1-1-1z" fill="#f6b400"/><circle cx="5.5" cy="4.6" r="2.1" fill="none" stroke="#fff" stroke-width="0.9" opacity=".85"/><rect x="4.6" y="6.6" width="1.8" height="1.6" fill="#fff" opacity=".85"/></svg>
<svg class="a" style="left:678px;top:156px" width="11.2" height="11" viewBox="0 0 12 12"><circle cx="6" cy="6" r="6" fill="#4285f4"/><path d="M3.6 8.4L8.8 3.4" stroke="#fff" stroke-width="1.5" stroke-linecap="round" fill="none"/><circle cx="3" cy="5" r="1.1" fill="#fbbc04"/></svg>
<svg class="a" style="left:677.50px;top:529.50px;" width="11" height="11" viewBox="0 0 24 24"><path fill="#5f6368" d="M10 6L8.59 7.41 13.17 12l-4.58 4.59L10 18l6-6z"/></svg>
<div class="a" style="left:0px;top:0px;width:1px;height:552px;background:#7d8185;"></div>
<div class="a" style="left:699px;top:0px;width:1px;height:552px;background:#a6a9ad;"></div>
<div class="a" style="left:0px;top:550px;width:247px;height:2px;background:#6f7276;"></div>
<div class="a" style="left:247px;top:550px;width:453px;height:2px;background:#c2c4c6;"></div>
<div class="a" style="left:405px;top:550px;width:25px;height:2px;background:#8c8f92;"></div>
<div class="a" style="left:603px;top:550px;width:32px;height:2px;background:#cdb08f;"></div>
<svg class="a" style="left:19.00px;top:128.00px;" width="12" height="12" viewBox="0 0 24 24"><path fill="#5f6368" d="M20 11H7.83l5.59-5.59L12 4l-8 8 8 8 1.41-1.41L7.83 13H20v-2z"/></svg>
<div class="a" id="ol1" style="left:22.37px;top:150.92px;font-size:10.169px;color:#5f6368;line-height:1;transform:scaleX(0.9261);transform-origin:0 0;">스마트 미러 구입 물품 목록</div>
<div class="a" id="ol2" style="left:22.30px;top:170.25px;font-size:10.061px;color:#5f6368;line-height:1;transform:scaleX(0.9471);transform-origin:0 0;">목록 (링크 첨부)</div>
<div class="a" id="ol3" style="left:22.96px;top:190.06px;font-size:9.548px;color:#444;line-height:1;transform:scaleX(0.9923);transform-origin:0 0;font-weight:bold">+</div>
<div class="a" id="ol4" style="left:22.06px;top:207.00px;font-size:9.339px;color:#5f6368;line-height:1;transform:scaleX(1.0319);transform-origin:0 0;">텍스트를 입력하세요</div>
<div class="a" style="left:209px;top:146px;width:1px;height:6px;background:#000;"></div>
<div class="a" id="title1" style="left:214.98px;top:162.00px;font-size:23.372px;color:#000;line-height:1;transform:scaleX(0.9983);transform-origin:0 0;font-weight:bold">스마트 미러 구입 물품</div>
<div class="a" id="title2" style="left:214.77px;top:186.37px;font-size:25.494px;color:#000;line-height:1;transform:scaleX(0.9041);transform-origin:0 0;font-weight:bold">목록</div>
<div class="a" id="date" style="left:214.80px;top:220.75px;font-size:7.216px;color:#383838;line-height:1;transform:scaleX(0.9907);transform-origin:0 0;">2020-08-07</div>
<div class="a" id="h2" style="left:213.45px;top:265.73px;font-size:6.573px;color:#3d85c6;line-height:1;transform:scaleX(1.0311);transform-origin:0 0;font-weight:bold">목록 (링크 첨부)</div>
<div class="a" id="mic" style="left:215.19px;top:279.05px;font-size:7.361px;color:#6b6b6b;line-height:1;transform:scaleX(1.2701);transform-origin:0 0;font-weight:bold">마이크 -</div>
<div class="a" id="link0" style="left:214.50px;top:297.59px;font-size:8.007px;color:#2d62cf;line-height:1;transform:scaleX(1.2778);transform-origin:0 0;font-family:'Liberation Serif',serif;text-decoration:underline;text-decoration-thickness:1px;text-decoration-skip-ink:none;text-decoration-color:#7a9fe3;font-weight:bold">http://item.gmarket.co.kr/DetailView/Item.asp?goodscode</div>
<div class="a" id="link1" style="left:214.50px;top:309.83px;font-size:8.007px;color:#2d62cf;line-height:1;transform:scaleX(1.2169);transform-origin:0 0;font-family:'Liberation Serif',serif;text-decoration:underline;text-decoration-thickness:1px;text-decoration-skip-ink:none;text-decoration-color:#7a9fe3;font-weight:bold">=1571932857&amp;GoodsSale=Y&amp;jaehuid=200001169&amp;NaPm=ct</div>
<div class="a" id="link2" style="left:214.58px;top:324.46px;font-size:7.972px;color:#2d62cf;line-height:1;transform:scaleX(1.2121);transform-origin:0 0;font-family:'Liberation Serif',serif;text-decoration:underline;text-decoration-thickness:1px;text-decoration-skip-ink:none;text-decoration-color:#7a9fe3;font-weight:bold">%3Dkdizkeko0%7Cci%3D03dff9c9740abd43d2731525120d3</div>
<div class="a" id="link3" style="left:214.50px;top:338.09px;font-size:7.972px;color:#2d62cf;line-height:1;transform:scaleX(1.2060);transform-origin:0 0;font-family:'Liberation Serif',serif;text-decoration:underline;text-decoration-thickness:1px;text-decoration-skip-ink:none;text-decoration-color:#7a9fe3;font-weight:bold">7d2ec5b3f43%7Ctr%3Dslbrc%7Csn%3D24%7Chk%3Dc591</div>
<div class="a" id="link4" style="left:214.50px;top:350.37px;font-size:7.972px;color:#2d62cf;line-height:1;transform:scaleX(1.2961);transform-origin:0 0;font-family:'Liberation Serif',serif;text-decoration:underline;text-decoration-thickness:1px;text-decoration-skip-ink:none;text-decoration-color:#7a9fe3;font-weight:bold">5c54d707addf2cc64a995db960b30edc1f20</div>
<div class="a" id="linkA" style="left:214.50px;top:388.79px;font-size:7.209px;color:#2d62cf;line-height:1;transform:scaleX(1.4313);transform-origin:0 0;font-family:'Liberation Serif',serif;text-decoration:underline;text-decoration-thickness:1px;text-decoration-skip-ink:none;text-decoration-color:#7a9fe3;font-weight:bold">http://item.gmarket.co.kr/Item?goodscode=991454350</div>
<div class="a" id="linkB" style="left:214.50px;top:405.86px;font-size:7.847px;color:#2d62cf;line-height:1;transform:scaleX(1.3202);transform-origin:0 0;font-family:'Liberation Serif',serif;text-decoration:underline;text-decoration-thickness:1px;text-decoration-skip-ink:none;text-decoration-color:#7a9fe3;font-weight:bold">http://item.gmarket.co.kr/Item?goodscode=990800183</div>
<div class="a" id="change" style="left:214.09px;top:441.46px;font-size:9.193px;color:#6b6b6b;line-height:1;transform:scaleX(0.9722);transform-origin:0 0;font-weight:bold">변화가 없...^^;</div>
<div class="a" id="rplus" style="left:492.73px;top:266.89px;font-size:6.825px;color:#3d85c6;line-height:1;transform:scaleX(1.0940);transform-origin:0 0;font-weight:bold">+</div>
<div class="a" id="rh" style="left:493.45px;top:297.46px;font-size:6.741px;color:#3d85c6;line-height:1;transform:scaleX(0.9849);transform-origin:0 0;font-weight:bold">텍스트를 입력하세요</div>
<div class="a" id="r1" style="left:493.02px;top:310.92px;font-size:6.741px;color:#434343;line-height:1;transform:scaleX(0.9894);transform-origin:0 0;font-weight:bold">여기에 텍스트를 입력하세요</div>
<div class="a" id="r2" style="left:492.21px;top:321.29px;font-size:7.021px;color:#666;line-height:1;transform:scaleX(1.0051);transform-origin:0 0;">여기에 텍스트를 입력하세요</div>
<div class="a" id="r3" style="left:492.23px;top:332.02px;font-size:6.691px;color:#666;line-height:1;transform:scaleX(1.0289);transform-origin:0 0;">여기에 텍스트를 입력하세요.</div>
<div class="a" style="left:636.5px;top:525.5px;width:20.5px;height:21px;background:#fff;border-radius:3px;box-shadow:0 0 2px rgba(0,0,0,.25)"></div>
<svg class="a" style="left:641.5px;top:530px" width="11" height="12" viewBox="0 0 11 12"><path d="M1 0h9a1 1 0 0 1 1 1v8a1 1 0 0 1-1 1H7l-1.5 2L4 10H1a1 1 0 0 1-1-1V1a1 1 0 0 1 1-1z" fill="#5f6368"/><path d="M4.7 2.2h1.6v2.3h2.3v1.6H6.3v2.3H4.7V6.1H2.4V4.5h2.3z" fill="#fff"/></svg>
</body></html>
